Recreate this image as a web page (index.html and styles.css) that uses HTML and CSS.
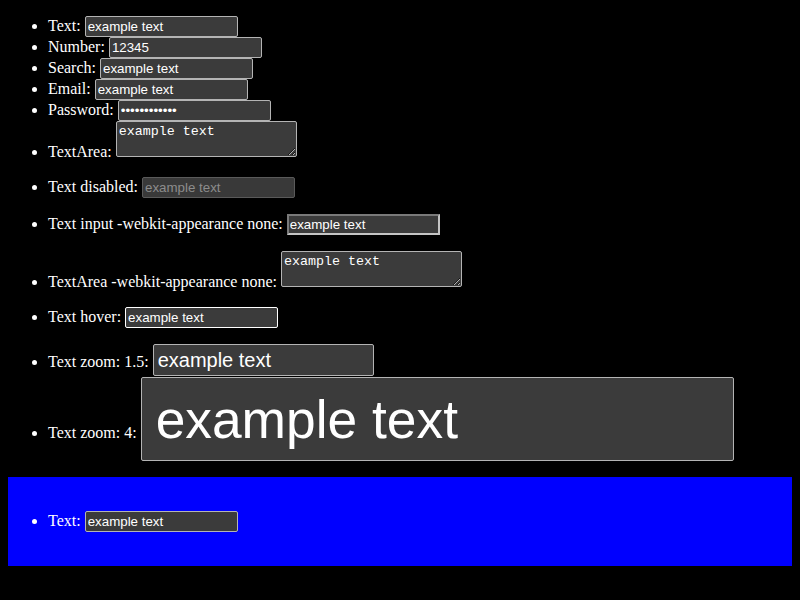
FILE: index.html
```html
<!DOCTYPE html>
<html>
<head>
<meta charset="utf-8">
<link rel="stylesheet" href="styles.css">
</head>
<body>
<ul class="list">
  <li>Text: <input class="field" type="text" value="example text"></li>
  <li>Number: <input class="field" type="number" value="12345"></li>
  <li>Search: <input class="field" type="search" value="example text"></li>
  <li>Email: <input class="field" type="email" value="example text"></li>
  <li>Password: <input class="field" type="password" value="example text"></li>
  <li>TextArea: <textarea class="area">example text</textarea></li>
</ul>
<ul class="list">
  <li>Text disabled: <input class="field" type="text" value="example text" disabled></li>
</ul>
<ul class="list">
  <li>Text input -webkit-appearance none: <input class="field inset" type="text" value="example text"></li>
</ul>
<ul class="list">
  <li>TextArea -webkit-appearance none: <textarea class="area">example text</textarea></li>
</ul>
<ul class="list">
  <li>Text hover: <input class="field hover" type="text" value="example text"></li>
</ul>
<ul class="list">
  <li>Text zoom: 1.5: <input class="field zoom15" type="text" value="example text"></li>
  <li>Text zoom: 4: <input class="field zoom4" type="text" value="example text"></li>
</ul>
<div class="blue">
  <ul class="list inner">
    <li>Text: <input class="field" type="text" value="example text"></li>
  </ul>
</div>
</body>
</html>
```
FILE: styles.css
```css
:root {
  color-scheme: dark;
}
html {
  background: #000;
}
body {
  margin: 0;
  padding: 16px 8px 0;
  color: #fff;
  font-family: "Liberation Serif", serif;
  font-size: 16px;
}
.list {
  margin: 0 0 16px;
  padding-left: 40px;
}
.field {
  -webkit-appearance: none;
  appearance: none;
  box-sizing: border-box;
  width: 153px;
  height: 21px;
  margin: 0;
  padding: 1px 2px;
  border: 1px solid #b4b4b4;
  border-radius: 2px;
  background: #3b3b3b;
  color: #fff;
  font-family: "Liberation Sans", sans-serif;
  font-size: 13.333px;
  vertical-align: baseline;
}
.field::-webkit-inner-spin-button,
.field::-webkit-outer-spin-button,
.field::-webkit-search-cancel-button {
  -webkit-appearance: none;
  display: none;
}
.field:disabled {
  border-color: #5a5a5a;
  color: #8c8c8c;
  background: #393939;
}
.inset {
  border-radius: 0;
  border-width: 2px;
  border-style: solid;
  border-color: #7a7a7a #c4c4c4 #c4c4c4 #7a7a7a;
  padding: 0 1px;
}
.hover {
  border-color: #ffffff;
}
.area {
  box-sizing: border-box;
  width: 181px;
  height: 36px;
  margin: 0;
  padding: 2px;
  border: 1px solid #b4b4b4;
  border-radius: 2px;
  background: #3b3b3b;
  color: #fff;
  font-family: "Liberation Mono", monospace;
  font-size: 13.333px;
}
.zoom15 {
  width: 221px;
  height: 32px;
  margin-bottom: 1px;
  padding: 1px 4px;
  font-size: 20px;
}
.zoom4 {
  width: 593px;
  height: 84px;
  padding: 2px 14px;
  font-size: 53.333px;
}
.blue {
  background: #0000ff;
  padding: 18px 0;
}
.inner {
  margin: 16px 0;
}
```
